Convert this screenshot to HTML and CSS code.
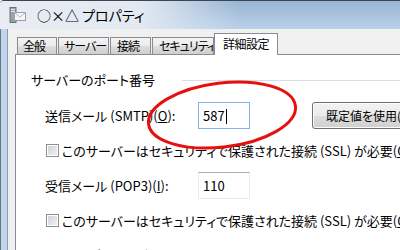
FILE: index.html
```html
<!DOCTYPE html>
<html lang="ja">
<head>
    <meta charset="UTF-8">
    <title>○×△ プロパティ</title>
    <link rel="stylesheet" href="styles.css">
</head>
<body>
    <div class="window">
        <div class="titlebar">
            <svg class="app-icon" width="17" height="17" viewBox="0 0 17 17">
                <rect x="1" y="0.5" width="6" height="15" fill="#9ea3a8" stroke="#6d7278"/>
                <rect x="2" y="2" width="4" height="1" fill="#e6e8ea"/>
                <rect x="2" y="4" width="4" height="1" fill="#e6e8ea"/>
                <rect x="2" y="13" width="2" height="1" fill="#5fb040"/>
                <rect x="5.5" y="5.5" width="11" height="8" fill="#f4f6f6" stroke="#9aa0a4"/>
                <path d="M5.5 5.5 L11 10 L16.5 5.5" fill="none" stroke="#b4babd"/>
            </svg>
            <span class="title">○×△ プロパティ</span>
        </div>
        <div class="frame">
            <div class="client">
                <ul class="tabs">
                    <li class="tab t1">全般</li>
                    <li class="tab t2">サーバー</li>
                    <li class="tab t3">接続</li>
                    <li class="tab t4">セキュリティ</li>
                    <li class="tab current">詳細設定</li>
                </ul>
                <div class="panel">
                    <div class="group-head"><span>サーバーのポート番号</span><i class="rule"></i></div>
                    <div class="row">
                        <label class="label">送信メール (SMTP)(<u>O</u>):</label>
                        <div class="textbox focus">587<span class="caret"></span></div>
                        <button class="btn">既定値を使用(<u>U</u>)</button>
                    </div>
                    <div class="check"><span class="box"></span>このサーバーはセキュリティで保護された接続 (SSL) が必要(<u>Q</u>)</div>
                    <div class="row">
                        <label class="label">受信メール (POP3)(<u>I</u>):</label>
                        <div class="textbox">110</div>
                    </div>
                    <div class="check"><span class="box"></span>このサーバーはセキュリティで保護された接続 (SSL) が必要(<u>C</u>)</div>
                    <div class="group-head last"><span>サーバーのタイムアウト</span><i class="rule"></i></div>
                </div>
            </div>
        </div>
        <!-- 赤い丸の注釈 -->
        <svg class="mark" width="400" height="250" viewBox="0 0 400 250">
            <ellipse cx="222" cy="115" rx="74" ry="32" transform="rotate(-7 222 115)" fill="none" stroke="#e8100c" stroke-width="3"/>
        </svg>
    </div>
</body>
</html>
```

FILE: styles.css
```css
* {
    margin: 0;
    padding: 0;
}
body {
    width: 400px;
    height: 250px;
    overflow: hidden;
    font-family: "Noto Sans CJK JP", "Noto Sans", sans-serif;
    font-size: 13px;
    font-feature-settings: "palt";
    color: #000;
}
.window {
    width: 400px;
    height: 250px;
    position: relative;
    overflow: hidden;
    border-top: 1px solid #3d4650;
    border-top-left-radius: 4px;
    box-sizing: border-box;
    background: #bfd4ea;
}
.titlebar {
    height: 28px;
    display: flex;
    align-items: center;
    padding-left: 9px;
    background: linear-gradient(to right, rgba(232, 237, 243, 1) 0%, rgba(226, 233, 241, 1) 35%, rgba(160, 186, 213, 0) 60%),
                linear-gradient(#98b4d1, #b9d1ea);
}
.app-icon {
    flex-shrink: 0;
    margin-top: 1px;
}
.title {
    margin-left: 11px;
    font-size: 14px;
    line-height: 16px;
    white-space: nowrap;
}
.frame {
    height: 221px;
    border-left: 1px solid #66768a;
    padding-left: 6px;
    background: #c2d6eb;
}
.client {
    height: 221px;
    border-left: 1px solid #8d9bab;
    padding-left: 7px;
    padding-top: 4px;
    background: #f0f0f0;
    box-sizing: border-box;
}
.tabs {
    list-style: none;
    display: flex;
    align-items: flex-end;
    height: 21px;
    padding-left: 2px;
    position: relative;
    z-index: 1;
}
.tab {
    box-sizing: border-box;
    flex-shrink: 0;
    height: 17px;
    margin-right: 1px;
    padding-left: 5px;
    font-size: 12px;
    line-height: 16px;
    letter-spacing: -1px;
    border: 1px solid #898c95;
    border-bottom: none;
    background: linear-gradient(#f3f3f3, #ebebeb 50%, #dddddd 51%, #cfcfcf);
    white-space: nowrap;
    overflow: hidden;
}
.t1 { width: 40px; }
.t2 { width: 51px; }
.t3 { width: 41px; padding-left: 6px; }
.t4 { width: 62px; margin-right: 0; padding-left: 6px; }
.current {
    width: 64px;
    height: 22px;
    margin-bottom: -1px;
    padding-left: 8px;
    line-height: 20px;
    letter-spacing: -0.5px;
    background: #fff;
}
.panel {
    height: 200px;
    border: 1px solid #898c95;
    border-right: none;
    background: #fff;
    padding-left: 15px;
    padding-top: 15px;
}
.group-head {
    display: flex;
    align-items: center;
    height: 20px;
    line-height: 20px;
}
.group-head span {
    flex-shrink: 0;
    white-space: nowrap;
}
.rule {
    flex: 1;
    height: 1px;
    margin-left: 27px;
    background: #d5dfe5;
}
.last {
    margin-top: 15px;
}
.row {
    display: flex;
    align-items: center;
    height: 27px;
    margin-top: 12px;
    padding-left: 14px;
}
.row > * {
    flex-shrink: 0;
}
.label {
    width: 153px;
    white-space: nowrap;
}
.textbox {
    box-sizing: border-box;
    width: 52px;
    height: 27px;
    padding-left: 4px;
    line-height: 25px;
    border: 1px solid #e3e9ef;
    border-top-color: #abadb3;
}
.focus {
    border-color: #7eb4ea;
}
.caret {
    display: inline-block;
    width: 1px;
    height: 15px;
    margin-left: 1px;
    vertical-align: -3px;
    background: #000;
}
.btn {
    box-sizing: border-box;
    height: 27px;
    margin-left: 62px;
    padding: 0 13px;
    font-family: inherit;
    font-size: 12px;
    font-feature-settings: "palt";
    white-space: nowrap;
    border: 1px solid #707070;
    border-radius: 3px;
    background: linear-gradient(#f2f2f2, #ebebeb 50%, #dddddd 51%, #cfcfcf);
    box-shadow: inset 0 0 0 1px #fcfcfc;
}
.check {
    display: flex;
    align-items: center;
    height: 20px;
    margin-top: 11px;
    padding-left: 15px;
    white-space: nowrap;
}
.box {
    box-sizing: border-box;
    width: 13px;
    height: 13px;
    margin-right: 3px;
    flex-shrink: 0;
    border: 1px solid #8e8f8f;
    background: linear-gradient(135deg, #cbcfd5, #f4f4f4);
    box-shadow: inset 0 0 0 1px #fff;
}
.mark {
    position: absolute;
    left: 0;
    top: -1px;
    pointer-events: none;
}
```
